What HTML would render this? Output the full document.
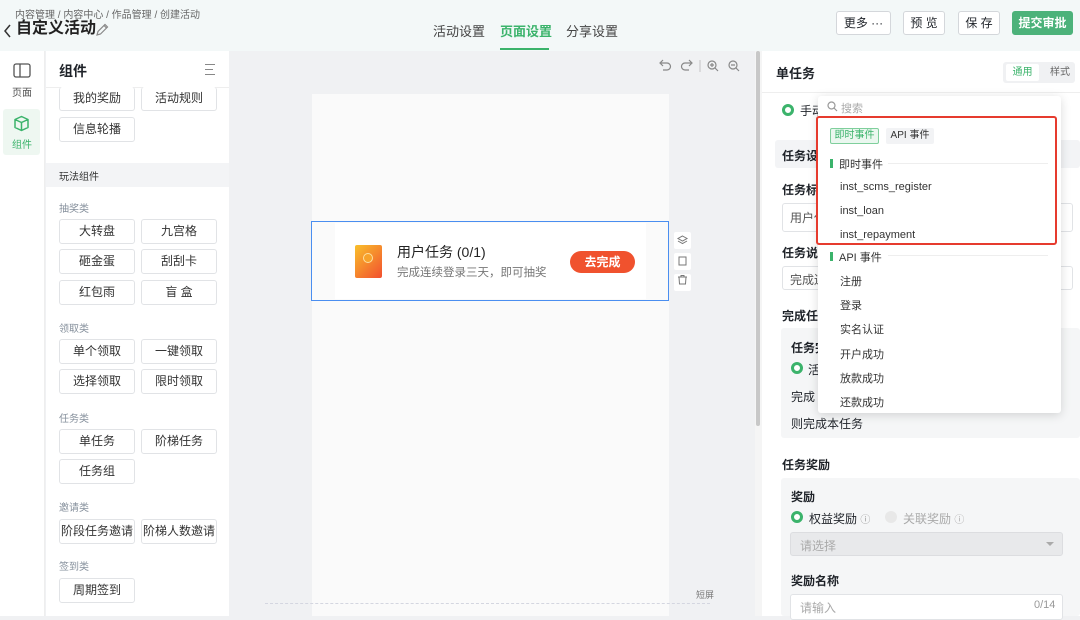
<!DOCTYPE html>
<html><head><meta charset="utf-8"><style>
*{box-sizing:border-box;margin:0;padding:0}
body{width:1080px;height:616px;overflow:hidden;font-family:"Liberation Sans","Noto Sans CJK SC",sans-serif;color:#1f2329;font-size:12px;background:#f0f1f3;position:relative}
.a{position:absolute}
.btn{position:absolute;width:76px;height:25px;border:1px solid #e1e3e6;border-radius:3px;background:#fff;text-align:center;line-height:23px;font-size:12px;color:#333}
.lbl{position:absolute;left:59px;font-size:10px;color:#86909c}
.hb{position:absolute;top:11px;height:24px;border:1px solid #d4d7db;border-radius:3px;background:#fff;text-align:center;line-height:22px;font-size:12px}
.rl{position:absolute;font-size:12px;color:#1f2329}
.inp{position:absolute;border:1px solid #e1e3e6;border-radius:3px;background:#fff}
.radio{position:absolute;width:12px;height:12px;border-radius:50%;border:3px solid #3bb36b;background:#fff}
.di{position:absolute;left:840px;font-size:11px;color:#333}
</style></head><body>
<!-- header -->
<div class="a" style="left:0;top:0;width:1080px;height:51px;background:#f3f8f8"></div>
<div class="a" style="left:15px;top:6px;font-size:10px;color:#666">内容管理 / 内容中心 / 作品管理 / 创建活动</div>
<svg class="a" style="left:3px;top:24px" width="9" height="14"><path d="M7 1 L2 7 L7 13" fill="none" stroke="#333" stroke-width="1.5"/></svg>
<div class="a" style="left:16px;top:18px;font-size:16px;font-weight:bold;color:#222;line-height:22px">自定义活动</div>
<svg class="a" style="left:95px;top:23px" width="14" height="14" viewBox="0 0 14 14"><path d="M2 12 L3 8.5 L10 1.5 L12.5 4 L5.5 11 Z M9 2.5 L11.5 5" fill="none" stroke="#888" stroke-width="1.2"/></svg>
<div class="a" style="left:433px;top:21px;font-size:13px;color:#444">活动设置</div>
<div class="a" style="left:500px;top:21px;font-size:13px;color:#3bb36b;font-weight:bold">页面设置</div>
<div class="a" style="left:500px;top:48px;width:49px;height:2px;background:#3bb36b"></div>
<div class="a" style="left:566px;top:21px;font-size:13px;color:#444">分享设置</div>
<div class="hb" style="left:836px;width:55px">更多 ···</div>
<div class="hb" style="left:903px;width:42px">预 览</div>
<div class="hb" style="left:958px;width:42px">保 存</div>
<div class="hb" style="left:1012px;width:61px;background:#4cb27a;border-color:#4cb27a;color:#fff;font-weight:bold">提交审批</div>
<!-- left rail -->
<div class="a" style="left:0;top:51px;width:45px;height:565px;background:#fff;border-right:1px solid #eee"></div>
<svg class="a" style="left:13px;top:63px" width="18" height="15"><rect x="1" y="1" width="16" height="13" rx="2" fill="none" stroke="#555" stroke-width="1.3"/><line x1="7" y1="1" x2="7" y2="14" stroke="#555" stroke-width="1.3"/></svg>
<div class="a" style="left:12px;top:84px;font-size:10px;color:#555">页面</div>
<div class="a" style="left:3px;top:109px;width:37px;height:46px;background:#eef7f1;border-radius:3px"></div>
<svg class="a" style="left:13px;top:115px" width="17" height="17" viewBox="0 0 17 17"><path d="M8.5 1.5 L15 4.5 V12.5 L8.5 15.5 L2 12.5 V4.5 Z M2 4.5 L8.5 7.5 L15 4.5 M8.5 7.5 V15.5" fill="none" stroke="#3bb36b" stroke-width="1.5" stroke-linejoin="round"/></svg>
<div class="a" style="left:12px;top:136px;font-size:10px;color:#3bb36b">组件</div>
<!-- left panel -->
<div class="a" style="left:46px;top:51px;width:183px;height:565px;background:#fff"></div>
<div class="a" style="left:59px;top:61px;font-size:14px;font-weight:bold">组件</div>
<div class="a" style="left:205px;top:64px;width:10px;height:1px;background:#888"></div>
<div class="a" style="left:205px;top:69px;width:8px;height:1px;background:#888"></div>
<div class="a" style="left:205px;top:74px;width:10px;height:1px;background:#888"></div>
<div class="a" style="left:46px;top:87px;width:183px;height:1px;background:#eee"></div>
<div class="btn" style="left:59px;top:87px;height:24px;line-height:22px;border-top:none">我的奖励</div>
<div class="btn" style="left:141px;top:87px;height:24px;line-height:22px;border-top:none">活动规则</div>
<div class="btn" style="left:59px;top:117px">信息轮播</div>
<div class="a" style="left:46px;top:163px;width:183px;height:24px;background:#f3f4f6"></div>
<div class="a" style="left:59px;top:168px;font-size:10px;color:#333">玩法组件</div>
<div class="lbl" style="top:200px">抽奖类</div>
<div class="btn" style="left:59px;top:219px">大转盘</div><div class="btn" style="left:141px;top:219px">九宫格</div>
<div class="btn" style="left:59px;top:249px">砸金蛋</div><div class="btn" style="left:141px;top:249px">刮刮卡</div>
<div class="btn" style="left:59px;top:280px">红包雨</div><div class="btn" style="left:141px;top:280px">盲 盒</div>
<div class="lbl" style="top:320px">领取类</div>
<div class="btn" style="left:59px;top:339px">单个领取</div><div class="btn" style="left:141px;top:339px">一键领取</div>
<div class="btn" style="left:59px;top:369px">选择领取</div><div class="btn" style="left:141px;top:369px">限时领取</div>
<div class="lbl" style="top:410px">任务类</div>
<div class="btn" style="left:59px;top:429px">单任务</div><div class="btn" style="left:141px;top:429px">阶梯任务</div>
<div class="btn" style="left:59px;top:459px">任务组</div>
<div class="lbl" style="top:499px">邀请类</div>
<div class="btn" style="left:59px;top:519px">阶段任务邀请</div><div class="btn" style="left:141px;top:519px">阶梯人数邀请</div>
<div class="lbl" style="top:558px">签到类</div>
<div class="btn" style="left:59px;top:578px">周期签到</div>
<!-- canvas -->
<svg class="a" style="left:657px;top:58px" width="90" height="16" viewBox="0 0 90 16" fill="none" stroke="#888" stroke-width="1.2"><path d="M4 5 H10 A3.5 3.5 0 0 1 10 12 H6 M6 2 L3 5 L6 8"/><path d="M34 5 H28 A3.5 3.5 0 0 0 28 12 H32 M32 2 L35 5 L32 8"/><line x1="43" y1="2" x2="43" y2="14" stroke="#ccc"/><circle cx="55" cy="7" r="4"/><path d="M58 10 L61 13 M53 7 H57 M55 5 V9"/><circle cx="76" cy="7" r="4"/><path d="M79 10 L82 13 M74 7 H78"/></svg>
<div class="a" style="left:312px;top:94px;width:357px;height:522px;background:#fafafa"></div>
<div class="a" style="left:265px;top:603px;width:445px;border-top:1px dashed #d4d6e0"></div>
<div class="a" style="left:696px;top:588px;font-size:9px;color:#777">短屏</div>
<div class="a" style="left:311px;top:221px;width:358px;height:80px;border:1.5px solid #4a8ef0"></div>
<div class="a" style="left:335px;top:223px;width:311px;height:76px;background:#fff"></div>
<div class="a" style="left:355px;top:245px;width:27px;height:33px;border-radius:2px;background:linear-gradient(135deg,#f9c02b,#f24f2f)"></div>
<div class="a" style="left:363px;top:253px;width:10px;height:10px;border-radius:50%;background:#f7a22b;border:1px solid #fde0a0"></div>
<div class="a" style="left:397px;top:242px;font-size:14px;color:#222">用户任务 (0/1)</div>
<div class="a" style="left:397px;top:264px;font-size:11.5px;color:#777">完成连续登录三天，即可抽奖</div>
<div class="a" style="left:570px;top:251px;width:65px;height:22px;border-radius:11px;background:#f0522e;color:#fff;font-weight:bold;text-align:center;line-height:22px;font-size:12px">去完成</div>
<div class="a" style="left:674px;top:232px;width:17px;height:17px;background:#fff;border-radius:2px"></div>
<div class="a" style="left:674px;top:253px;width:17px;height:17px;background:#fff;border-radius:2px"></div>
<div class="a" style="left:674px;top:274px;width:17px;height:17px;background:#fff;border-radius:2px"></div>
<svg class="a" style="left:674px;top:232px" width="17" height="60" viewBox="0 0 17 60" fill="none" stroke="#777" stroke-width="1"><path d="M8.5 4 L13 6.5 L8.5 9 L4 6.5 Z M4 9 L8.5 11.5 L13 9"/><rect x="5" y="25" width="7" height="8"/><path d="M4 45 H13 M7 45 V43.5 H10 V45 M5 45 L5.5 52 H11.5 L12 45"/></svg>
<div class="a" style="left:755px;top:51px;width:7px;height:565px;background:#f5f5f5"></div>
<div class="a" style="left:756px;top:51px;width:4px;height:375px;background:#c8c8c8;border-radius:2px"></div>
<!-- right panel -->
<div class="a" style="left:762px;top:51px;width:318px;height:565px;background:#fff"></div>
<div class="a" style="left:776px;top:63px;font-size:13px;font-weight:bold">单任务</div>
<div class="a" style="left:1003px;top:62px;width:72px;height:21px;background:#f0f1f3;border-radius:3px"></div>
<div class="a" style="left:1006px;top:64px;width:33px;height:17px;background:#fff;border-radius:2px;color:#3bb36b;font-size:10px;text-align:center;line-height:17px">通用</div>
<div class="a" style="left:1050px;top:64px;font-size:10px;color:#666;line-height:17px">样式</div>
<div class="a" style="left:762px;top:92px;width:318px;height:1px;background:#eee"></div>
<div class="radio" style="left:782px;top:104px"></div>
<div class="rl" style="left:800px;top:102px">手动</div>
<div class="a" style="left:775px;top:140px;width:305px;height:28px;background:#f3f4f6;border-radius:3px"></div>
<div class="rl" style="left:782px;top:147px;font-weight:bold">任务设置</div>
<div class="rl" style="left:782px;top:181px;font-weight:bold">任务标题</div>
<div class="inp" style="left:782px;top:203px;width:291px;height:29px"></div>
<div class="rl" style="left:790px;top:209px;color:#555">用户任</div>
<div class="rl" style="left:782px;top:244px;font-weight:bold">任务说明</div>
<div class="inp" style="left:782px;top:266px;width:291px;height:24px"></div>
<div class="rl" style="left:790px;top:271px;color:#555">完成连</div>
<div class="rl" style="left:782px;top:307px;font-weight:bold">完成任务</div>
<div class="a" style="left:781px;top:328px;width:299px;height:110px;background:#f5f6f7;border-radius:3px"></div>
<div class="rl" style="left:791px;top:339px;font-weight:bold">任务完成</div>
<div class="radio" style="left:791px;top:362px"></div>
<div class="rl" style="left:808px;top:361px">活</div>
<div class="rl" style="left:791px;top:388px">完成</div>
<div class="rl" style="left:791px;top:415px">则完成本任务</div>
<div class="rl" style="left:782px;top:456px;font-weight:bold">任务奖励</div>
<div class="a" style="left:781px;top:478px;width:299px;height:138px;background:#f5f6f7;border-radius:3px"></div>
<div class="rl" style="left:791px;top:488px;font-weight:bold">奖励</div>
<div class="radio" style="left:791px;top:511px"></div>
<div class="rl" style="left:809px;top:510px">权益奖励 <span style="color:#999;font-size:10px">ⓘ</span></div>
<div class="a" style="left:885px;top:511px;width:12px;height:12px;border-radius:50%;background:#e8e8e8"></div>
<div class="rl" style="left:903px;top:510px;color:#aaa">关联奖励 <span style="font-size:10px">ⓘ</span></div>
<div class="a" style="left:790px;top:532px;width:273px;height:24px;background:#e8e9eb;border:1px solid #dcdde0;border-radius:3px"></div>
<div class="rl" style="left:800px;top:537px;color:#aaa">请选择</div>
<div class="a" style="left:1046px;top:542px;border:4px solid transparent;border-top:4px solid #aaa"></div>
<div class="rl" style="left:791px;top:572px;font-weight:bold">奖励名称</div>
<div class="inp" style="left:790px;top:594px;width:273px;height:26px"></div>
<div class="rl" style="left:800px;top:599px;color:#aaa">请输入</div>
<div class="rl" style="left:1034px;top:599px;color:#999;font-size:11px">0/14</div>
<!-- dropdown -->
<div class="a" style="left:818px;top:96px;width:243px;height:317px;background:#fff;box-shadow:0 2px 10px rgba(0,0,0,.15);border-radius:3px"></div>
<svg class="a" style="left:827px;top:101px" width="11" height="11" fill="none" stroke="#999" stroke-width="1.2"><circle cx="4.5" cy="4.5" r="3.5"/><path d="M7 7 L10 10"/></svg>
<div class="a" style="left:841px;top:100px;font-size:11px;color:#aaa">搜索</div>
<div class="a" style="left:816px;top:116px;width:241px;height:129px;border:2px solid #e63b2e;border-radius:3px"></div>
<div class="a" style="left:830px;top:128px;width:49px;height:16px;border:1px solid #7fcf9c;background:#eaf7ef;border-radius:2px;color:#3bb36b;font-size:10px;text-align:center;line-height:14px">即时事件</div>
<div class="a" style="left:886px;top:128px;width:48px;height:16px;background:#f2f3f5;border-radius:2px;color:#333;font-size:10px;text-align:center;line-height:16px">API 事件</div>
<div class="a" style="left:830px;top:159px;width:3px;height:9px;background:#3bb36b"></div>
<div class="a" style="left:839px;top:156px;font-size:11px;color:#333">即时事件</div>
<div class="a" style="left:888px;top:163px;width:160px;height:1px;background:#eee"></div>
<div class="di" style="top:181px">inst_scms_register</div>
<div class="di" style="top:205px">inst_loan</div>
<div class="di" style="top:229px">inst_repayment</div>
<div class="a" style="left:830px;top:252px;width:3px;height:9px;background:#3bb36b"></div>
<div class="a" style="left:839px;top:249px;font-size:11px;color:#333">API 事件</div>
<div class="a" style="left:888px;top:255px;width:160px;height:1px;background:#eee"></div>
<div class="di" style="top:273px">注册</div>
<div class="di" style="top:297px">登录</div>
<div class="di" style="top:321px">实名认证</div>
<div class="di" style="top:346px">开户成功</div>
<div class="di" style="top:370px">放款成功</div>
<div class="di" style="top:394px">还款成功</div>
</body></html>
